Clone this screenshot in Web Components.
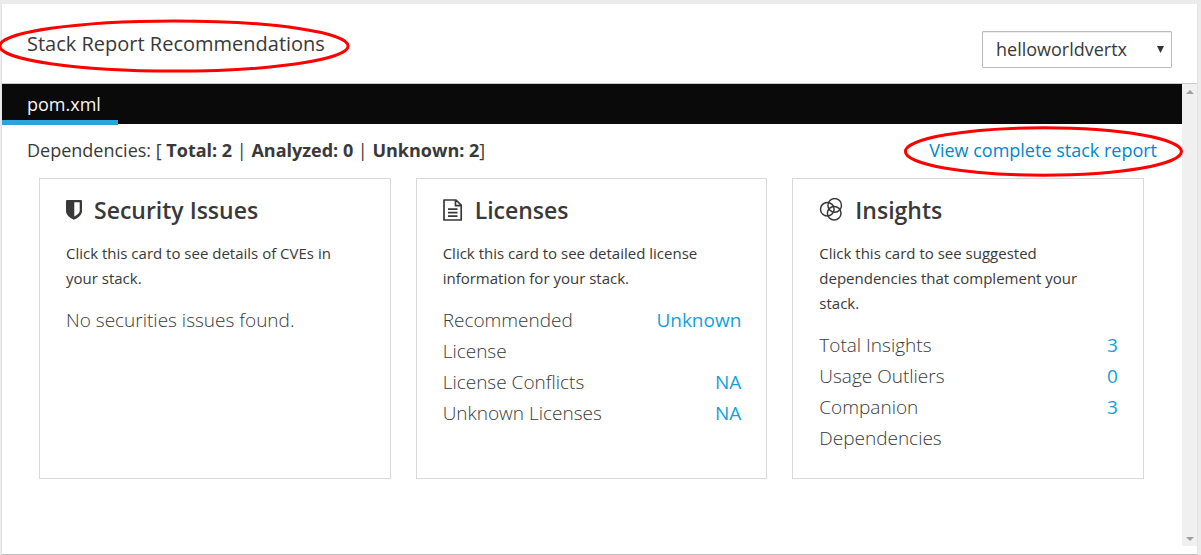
<!DOCTYPE html>
<html lang="en">
<head>
<meta charset="utf-8">
<title>Stack Report Recommendations</title>
<style>
  body { margin: 0; background: #ebebeb; color: #393939; font-family: "Open Sans", "Noto Sans", sans-serif; font-size: 18px; }
</style>
</head>
<body>
<stack-panel>
  <marked-note slot="title"><h1 style="margin:0;font:inherit">Stack Report Recommendations</h1></marked-note>
  <project-select slot="action"></project-select>
  <file-tab slot="tabs">pom.xml</file-tab>
  <dependency-summary slot="summary" total="2" analyzed="0" unknown="2"></dependency-summary>
  <marked-note slot="link" class="link"><report-link href="#report">View complete stack report</report-link></marked-note>

  <report-card icon="shield" heading="Security Issues">
    <span slot="description">Click this card to see details of CVEs in your stack.</span>
    <span>No securities issues found.</span>
  </report-card>
  <report-card icon="file" heading="Licenses">
    <span slot="description">Click this card to see detailed license information for your stack.</span>
    <stat-row value="Unknown">Recommended License</stat-row>
    <stat-row value="NA">License Conflicts</stat-row>
    <stat-row value="NA">Unknown Licenses</stat-row>
  </report-card>
  <report-card icon="rings" heading="Insights">
    <span slot="description">Click this card to see suggested dependencies that complement your stack.</span>
    <stat-row value="3">Total Insights</stat-row>
    <stat-row value="0">Usage Outliers</stat-row>
    <stat-row value="3">Companion Dependencies</stat-row>
  </report-card>
</stack-panel>

<script>
class Base extends HTMLElement {
  constructor() { super(); this.attachShadow({ mode: 'open' }); }
  connectedCallback() { this.shadowRoot.innerHTML = this.render(); }
}

customElements.define('stack-panel', class extends Base {
  render() { return `
    <style>
      :host { display: flex; box-sizing: border-box; min-height: 100vh; padding: 4px 4px 1px 2px; }
      .panel { flex: 1; min-width: 0; display: flex; flex-direction: column; background: #fff; box-shadow: 0 1px 1px rgba(0,0,0,.2); }
      header { display: flex; align-items: center; justify-content: space-between; box-sizing: border-box; min-height: 80px; padding: 12px 25px 0; border-bottom: 1px solid #ccc; }
      .title { font-size: 20px; line-height: 28px; padding-bottom: 12px; }
      .body { flex: 1; display: flex; margin-bottom: 8px; }
      main { flex: 1; min-width: 0; }
      nav { display: flex; height: 40px; background: #0a0a0a; }
      .bar { display: flex; justify-content: space-between; align-items: center; padding: 12px 25px 0; line-height: 28px; }
      .cards { display: grid; grid-template-columns: repeat(3, minmax(0, 1fr)); gap: 25px; padding: 14px 38px 14px 37px; }
    </style>
    <section class="panel">
      <header><div class="title"><slot name="title"></slot></div><slot name="action"></slot></header>
      <div class="body">
        <main>
          <nav><slot name="tabs"></slot></nav>
          <div class="bar"><slot name="summary"></slot><slot name="link"></slot></div>
          <div class="cards"><slot></slot></div>
        </main>
        <scroll-rail></scroll-rail>
      </div>
    </section>`; }
});

customElements.define('scroll-rail', class extends Base {
  render() { return `
    <style>
      :host { display: flex; flex-direction: column; justify-content: space-between; align-items: center; width: 15px; padding: 6px 0 5px; box-sizing: border-box; background: #f0f0f0; }
      svg { display: block; width: 8px; height: 4px; fill: #a0a0a0; }
    </style>
    <svg viewBox="0 0 8 4" aria-hidden="true"><path d="M0 4L4 0l4 4z"/></svg>
    <svg viewBox="0 0 8 4" aria-hidden="true"><path d="M0 0l4 4 4-4z"/></svg>`; }
});

/* Red ellipse drawn over and around the slotted content. */
customElements.define('marked-note', class extends Base {
  render() { return `
    <style>
      :host { display: block; position: relative; }
      svg { position: absolute; top: -11px; left: -29px; width: calc(100% + 54px); height: 54px; overflow: visible; pointer-events: none; }
      :host(.link) svg { top: -10px; left: -25px; width: calc(100% + 51px); height: 51px; }
      ellipse { fill: none; stroke: #f00; stroke-width: 3px; }
    </style>
    <slot></slot>
    <svg aria-hidden="true"><ellipse cx="50%" cy="50%" rx="49.5%" ry="46.5%"/></svg>`; }
});

customElements.define('project-select', class extends Base {
  render() { return `
    <style>
      :host { display: block; position: relative; }
      select { appearance: none; display: block; box-sizing: border-box; width: 190px; height: 37px; margin: 0; padding: 0 30px 2px 13px; border: 1px solid #bbb; border-radius: 1px; background: #fff; box-shadow: inset 0 1px 1px rgba(0,0,0,.075); color: #393939; font: 18px "Open Sans", sans-serif; }
      svg { position: absolute; right: 8px; top: 15px; width: 7px; height: 7px; fill: #333; pointer-events: none; }
    </style>
    <select aria-label="Project"><option>helloworldvertx</option></select>
    <svg viewBox="0 0 7 7" aria-hidden="true"><path d="M0 0h7L3.5 7z"/></svg>`; }
});

customElements.define('file-tab', class extends Base {
  render() { return `
    <style>
      :host { display: block; }
      button { display: block; box-sizing: border-box; height: 41px; margin: 0; padding: 3px 17px 0 25px; border: 0; border-bottom: 5px solid #29a4dd; background: none; color: #f5f5f5; font: 18px "Open Sans", sans-serif; }
    </style>
    <button type="button"><slot></slot></button>`; }
});

customElements.define('dependency-summary', class extends Base {
  render() { const a = n => this.getAttribute(n); return `
    <style>:host { display: block; } b { font-weight: 700; }</style>
    Dependencies: [ <b>Total: ${a('total')}</b> | <b>Analyzed: ${a('analyzed')}</b> | <b>Unknown: ${a('unknown')}</b>]`; }
});

customElements.define('report-link', class extends Base {
  render() { return `
    <style>:host { display: block; } a { color: #0088ce; text-decoration: none; }</style>
    <a href="${this.getAttribute('href')}"><slot></slot></a>`; }
});

const ICONS = {
  shield: '<svg width="16" height="20" viewBox="0 0 16 20"><path fill="currentColor" fill-rule="evenodd" d="M0 1Q0 0 1 0H15q1 0 1 1v10c0 4-4 7-8 8.700C4 18 0 15 0 11zM8.300 2.300v14.200C11 15.200 13.700 13 13.700 11V2.300z"/></svg>',
  file: '<svg width="20" height="22" viewBox="0 0 20 22"><path fill="none" stroke="currentColor" stroke-width="1.700" stroke-linejoin="round" d="M1 1h12l5.200 5.200V21H1zM12.500 1v5.700h5.700M5 10.200h9.500M5 13.700h9.500M5 17.200h9.500"/></svg>',
  rings: '<svg width="24" height="24" viewBox="0 0 24 24"><g fill="none" stroke="currentColor" stroke-width="1.500"><circle cx="8.300" cy="11.200" r="6.800"/><circle cx="15.700" cy="7.400" r="6.800"/><circle cx="15.200" cy="15.200" r="6.800"/></g></svg>'
};

customElements.define('report-card', class extends Base {
  render() { return `
    <style>
      :host { display: block; box-sizing: border-box; min-height: 301px; padding: 13px 25px 22px 26px; border: 1px solid #d9d9d9; }
      h2 { display: flex; align-items: center; gap: 12px; margin: 0; font-size: 23px; font-weight: 550; line-height: 36px; }
      h2 svg { flex: none; }
      p { margin: 13px 0 14px; font-size: 15px; line-height: 25px; }
      .stats { font-size: 19px; font-weight: 300; line-height: 31px; }
    </style>
    <h2>${ICONS[this.getAttribute('icon')]}<span>${this.getAttribute('heading')}</span></h2>
    <p><slot name="description"></slot></p>
    <div class="stats"><slot></slot></div>`; }
});

customElements.define('stat-row', class extends Base {
  render() { return `
    <style>
      :host { display: flex; justify-content: space-between; }
      .label { width: 60%; }
      .value { color: #149fdb; font-weight: 400; }
    </style>
    <span class="label"><slot></slot></span><span class="value">${this.getAttribute('value')}</span>`; }
});
</script>
</body>
</html>
